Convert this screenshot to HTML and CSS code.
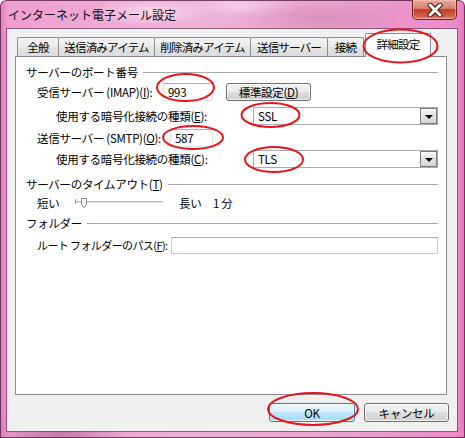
FILE: index.html
```html
<!DOCTYPE html>
<html lang="ja">
<head>
<meta charset="utf-8">
<title>インターネット電子メール設定</title>
<link rel="stylesheet" href="styles.css">
</head>
<body>
<div class="window">
  <div class="titlebar">
    <span class="title">インターネット電子メール設定</span>
    <div class="close">
      <svg width="18" height="14" viewBox="0 0 18 14">
        <path d="M4 2 L14 12 M14 2 L4 12" stroke="#3a1410" stroke-width="5" stroke-linecap="round"/>
        <path d="M4 2 L14 12 M14 2 L4 12" stroke="#ffffff" stroke-width="3" stroke-linecap="round"/>
      </svg>
    </div>
  </div>
  <div class="client">
    <div class="tabs">
      <div class="tab t1">全般</div>
      <div class="tab t2">送信済みアイテム</div>
      <div class="tab t3">削除済みアイテム</div>
      <div class="tab t4">送信サーバー</div>
      <div class="tab t5">接続</div>
      <div class="tab active">詳細設定</div>
    </div>
    <div class="panel">
      <div class="group">サーバーのポート番号</div>
      <div class="row r-imap">
        <span class="lbl w-imap">受信サーバー (IMAP)(<u>I</u>):</span>
        <div class="field f-imap">993</div>
        <button class="btn btn-default">標準設定(<u>D</u>)</button>
      </div>
      <div class="row sub r-e">
        <span class="lbl w-sub">使用する暗号化接続の種類(<u>E</u>):</span>
        <div class="select"><span>SSL</span><span class="arrow"></span></div>
      </div>
      <div class="row r-smtp">
        <span class="lbl w-smtp">送信サーバー (SMTP)(<u>O</u>):</span>
        <div class="field f-smtp">587</div>
      </div>
      <div class="row sub r-c">
        <span class="lbl w-sub">使用する暗号化接続の種類(<u>C</u>):</span>
        <div class="select"><span>TLS</span><span class="arrow"></span></div>
      </div>
      <div class="group g-timeout">サーバーのタイムアウト(<u>T</u>)</div>
      <div class="row r-slider">
        <span class="lbl w-short">短い</span>
        <svg class="slider" width="88" height="12" viewBox="0 0 88 12">
          <rect x="0" y="4" width="88" height="1" fill="#b9b9b9"/>
          <rect x="0" y="5" width="88" height="1" fill="#e6e6e6"/>
          <rect x="0" y="2" width="1" height="5" fill="#9a9a9a"/>
          <path d="M6.5 1.5 H11.5 V7.5 L9 10.5 L6.5 7.5 Z" fill="#f4f4f4" stroke="#8a8a8a" stroke-width="1"/>
        </svg>
        <span class="lbl w-long">長い</span>
        <span class="lbl">1 分</span>
      </div>
      <div class="group g-folder">フォルダー</div>
      <div class="row r-path">
        <span class="lbl w-path">ルート フォルダーのパス(<u>F</u>):</span>
        <div class="field f-path"></div>
      </div>
    </div>
    <div class="actions">
      <button class="btn btn-ok">OK</button>
      <button class="btn btn-cancel">キャンセル</button>
    </div>
  </div>
  <svg class="marks" width="465" height="438" viewBox="0 0 465 438">
    <g fill="none" stroke="#e8141c" stroke-width="2">
      <ellipse cx="400.5" cy="46" rx="37" ry="16.5"/>
      <ellipse cx="185.5" cy="87.5" rx="28.5" ry="13.5"/>
      <ellipse cx="270.5" cy="115" rx="29" ry="12"/>
      <ellipse cx="193" cy="137.5" rx="30" ry="11.5"/>
      <ellipse cx="274" cy="159.5" rx="29" ry="12.5"/>
      <ellipse cx="313" cy="409" rx="45" ry="16"/>
    </g>
  </svg>
</div>
</body>
</html>
```

FILE: styles.css
```css
* { box-sizing: border-box; }
html, body { margin: 0; padding: 0; }
body {
  width: 465px;
  height: 438px;
  overflow: hidden;
  font-family: "Noto Sans CJK JP", "Noto Sans", sans-serif;
  font-size: 11.5px;
  letter-spacing: -0.3px;
  color: #000;
}
u { text-decoration: underline; text-underline-offset: 1px; }

.window {
  position: relative;
  width: 465px;
  height: 438px;
  display: flex;
  flex-direction: column;
  background:
    radial-gradient(ellipse 70px 30px at 60px 430px, rgba(150,60,110,.45), transparent),
    radial-gradient(ellipse 60px 14px at 150px 12px, rgba(255,235,245,.7), transparent),
    radial-gradient(ellipse 90px 18px at 320px 18px, rgba(190,100,150,.35), transparent),
    radial-gradient(ellipse 60px 12px at 240px 6px, rgba(255,225,240,.6), transparent),
    linear-gradient(90deg, #e77abd 0, #ee9fcf 8px, #eeb2d7 40%, #e9a6cf 70%, #ee8ac8 457px, #e476b9 100%);
  box-shadow: inset 0 0 0 1px rgba(70,30,55,.75);
  border-radius: 6px 6px 0 0;
}

.titlebar {
  height: 29px;
  display: flex;
  justify-content: space-between;
  align-items: flex-start;
  flex: none;
}
.title {
  margin: 7px 0 0 8px;
  line-height: 16px;
  font-size: 12px;
  letter-spacing: 0;
  color: #111;
}
.close {
  width: 45px;
  height: 20px;
  margin-right: 8px;
  border: 1px solid #6a2418;
  border-top: none;
  border-radius: 0 0 5px 5px;
  background: linear-gradient(#e9a89b 0%, #d8806f 45%, #c4402a 50%, #cf5a40 80%, #e0866a 100%);
  box-shadow: inset 0 0 0 1px rgba(255,210,200,.5);
  display: flex;
  align-items: center;
  justify-content: center;
}

.client {
  flex: 1;
  margin: 0 8px 7px 7px;
  background: #f0f0f0;
  padding: 5px 10px 0 8px;
  box-shadow: 0 0 0 1px rgba(120,50,95,.7);
  display: flex;
  flex-direction: column;
}

.tabs {
  display: flex;
  align-items: flex-end;
  height: 22px;
  padding-left: 2px;
  flex: none;
}
.tab {
  height: 19px;
  border: 1px solid #898c95;
  border-bottom: none;
  margin-right: -1px;
  border-radius: 2px 2px 0 0;
  background: linear-gradient(#f3f3f3, #ebebeb 50%, #e3e3e3 50%, #dcdcdc);
  text-align: center;
  line-height: 18px;
  white-space: nowrap;
  letter-spacing: -0.8px;
}
.t1 { width: 42px; }
.t2 { width: 97px; }
.t3 { width: 97px; }
.t4 { width: 78px; }
.t5 { width: 37px; }
.tab.active {
  width: 66px;
  height: 24px;
  margin-left: 2px;
  margin-bottom: -1px;
  background: #fff;
  line-height: 20px;
  z-index: 2;
}

.panel {
  height: 339px;
  flex: none;
  border: 1px solid #898c95;
  background: #fff;
  padding: 7px 8px 0 10px;
}

.group {
  display: flex;
  align-items: center;
  height: 16px;
  line-height: 16px;
  white-space: nowrap;
}
.group::after {
  content: "";
  flex: 1;
  height: 1px;
  background: #a8a8a8;
  margin-left: 5px;
}
.g-timeout { margin-top: 8px; }
.g-folder { margin-top: 4px; }

.row {
  display: flex;
  align-items: center;
  height: 19px;
  padding-left: 11px;
}
.row.sub { padding-left: 30px; }
.r-imap { margin-top: 2px; }
.r-e { margin-top: 5px; }
.r-smtp { margin-top: 3px; }
.r-c { margin-top: 2px; }
.r-slider { margin-top: 3px; height: 16px; }
.r-path { margin-top: 5px; height: 18px; }

.lbl { flex: none; white-space: nowrap; line-height: 16px; }
.w-imap { width: 126px; }
.w-smtp { width: 133px; }
.w-sub { width: 197px; }
.w-path { width: 134px; font-size: 11px; letter-spacing: -0.6px; }
.w-short { width: 38px; }
.w-long { width: 34px; }
.slider { flex: none; margin-right: 16px; }

.field {
  height: 18px;
  border: 1px solid #e2e3ea;
  border-top-color: #abadb3;
  background: #fff;
  padding: 0 4px;
  line-height: 16px;
  flex: none;
}
.f-imap { width: 50px; }
.f-smtp { width: 43px; }
.f-path { flex: 1; height: 17px; border-color: #c9cbd1; border-top-color: #abadb3; }

.select {
  flex: 1;
  height: 18px;
  border: 1px solid #a5acb5;
  background: #fff;
  display: flex;
  justify-content: space-between;
  align-items: center;
  padding: 0 0 0 4px;
  line-height: 16px;
}
.arrow {
  width: 17px;
  height: 16px;
  border: 1px solid #7c7c7c;
  background: linear-gradient(#fafafa, #e4e4e4 50%, #d4d4d4);
  display: flex;
  align-items: center;
  justify-content: center;
}
.arrow::before {
  content: "";
  width: 0;
  height: 0;
  margin-top: 2px;
  border-left: 4px solid transparent;
  border-right: 4px solid transparent;
  border-top: 4px solid #000;
}

.btn {
  font-family: "Noto Sans CJK JP", "Noto Sans", sans-serif;
  font-size: 11.5px;
  letter-spacing: -0.3px;
  color: #000;
  height: 18px;
  padding: 0;
  line-height: 16px;
  border: 1px solid #707070;
  border-radius: 3px;
  background: linear-gradient(#f2f2f2, #ebebeb 50%, #dddddd 50%, #cfcfcf);
  box-shadow: inset 0 0 0 1px rgba(255,255,255,.7);
  flex: none;
}
.btn-default { width: 85px; margin-left: 13px; margin-top: 1px; }

.actions {
  display: flex;
  justify-content: flex-end;
  gap: 9px;
  margin-top: 8px;
  margin-right: -2px;
}
.btn-ok {
  width: 86px;
  height: 19px;
  border-color: #3c7fb1;
  background: linear-gradient(#eaf6fd, #d9f0fc 50%, #bee6fd 50%, #a7d9f5);
}
.btn-cancel { width: 85px; height: 19px; }

.marks {
  position: absolute;
  left: 0;
  top: 0;
  pointer-events: none;
  z-index: 5;
}
```
